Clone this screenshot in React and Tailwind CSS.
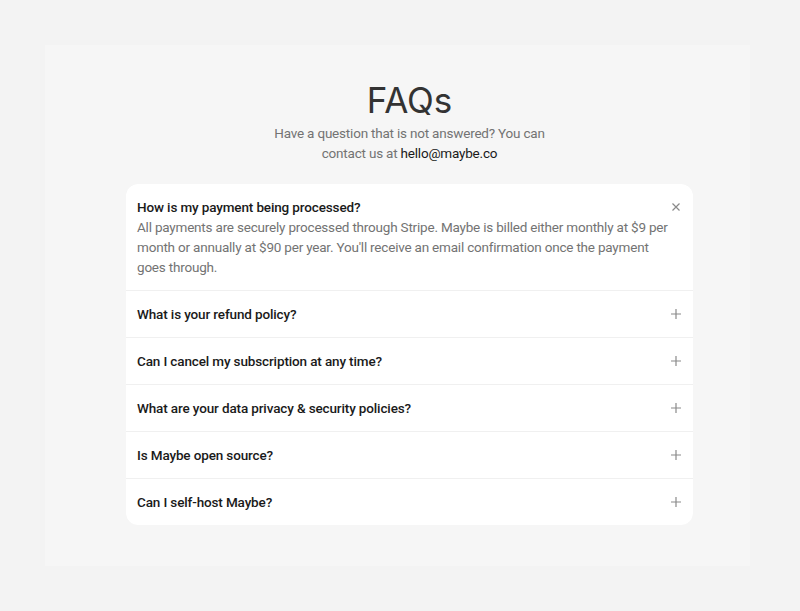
import { useState } from 'react';

const faqs = [
  {
    q: 'How is my payment being processed?',
    a: "All payments are securely processed through Stripe. Maybe is billed either monthly at $9 per month or annually at $90 per year. You'll receive an email confirmation once the payment goes through.",
  },
  { q: 'What is your refund policy?', a: '' },
  { q: 'Can I cancel my subscription at any time?', a: '' },
  { q: 'What are your data privacy & security policies?', a: '' },
  { q: 'Is Maybe open source?', a: '' },
  { q: 'Can I self-host Maybe?', a: '' },
];

function PlusIcon() {
  return (
    <svg width="12" height="12" viewBox="0 0 12 12" fill="none" stroke="#8a8a8a" strokeWidth="1.2">
      <path d="M6 1v10M1 6h10" />
    </svg>
  );
}

function CloseIcon() {
  return (
    <svg width="10" height="10" viewBox="0 0 10 10" fill="none" stroke="#8a8a8a" strokeWidth="1.2">
      <path d="M1.5 1.5l7 7M8.5 1.5l-7 7" />
    </svg>
  );
}

export default function App() {
  const [open, setOpen] = useState(0);

  return (
    <div className="min-h-screen bg-[#f3f3f3] p-[45px] pr-[50px]" style={{ fontFamily: 'Roboto, "Noto Sans", sans-serif' }}>
      <div className="h-[521px] bg-[#f6f6f6] pt-[35px] pl-[81px]">
        <div className="w-[567px] flex flex-col items-center">
          <h1
            className="text-[35px] leading-[40px] text-[#333333]"
            style={{ fontFamily: 'Inter, sans-serif' }}
          >
            FAQs
          </h1>
          <p className="mt-[3px] text-[13.5px] leading-[20px] tracking-[-0.015em] text-[#737373] text-center w-[290px]">
            Have a question that is not answered? You can contact us at{' '}
            <span className="text-[#1a1a1a]">hello@maybe.co</span>
          </p>
          <div className="mt-[21px] w-full bg-[#f0f0f0] rounded-xl overflow-hidden flex flex-col gap-px">
            {faqs.map((f, i) => (
              <div key={f.q} className="bg-white px-[11px] py-[13px]">
                <button
                  className="w-full flex items-center justify-between text-left"
                  onClick={() => setOpen(open === i ? -1 : i)}
                >
                  <span className="text-[13.5px] leading-[20px] tracking-[-0.01em] text-[#1a1a1a] font-medium">{f.q}</span>
                  <span className="w-[12px] h-[12px] flex items-center justify-center">
                    {open === i ? <CloseIcon /> : <PlusIcon />}
                  </span>
                </button>
                {open === i && f.a && (
                  <p className="text-[13.5px] leading-[20px] tracking-[-0.015em] text-[#737373] pr-[2px]">{f.a}</p>
                )}
              </div>
            ))}
          </div>
        </div>
      </div>
    </div>
  );
}
